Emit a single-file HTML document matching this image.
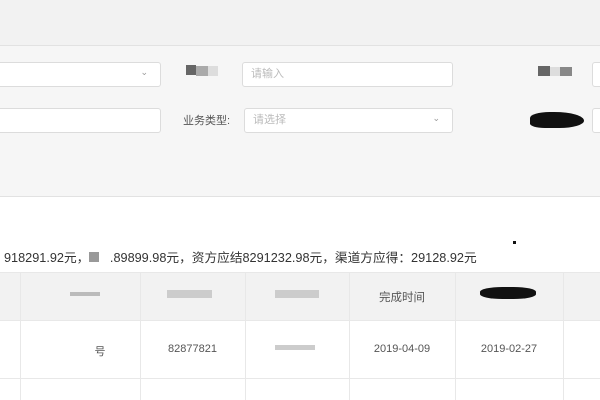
<!DOCTYPE html><html><head><meta charset="utf-8"><style>
*{margin:0;padding:0;box-sizing:border-box}
body{width:600px;height:400px;overflow:hidden;background:#fff;font-family:"Liberation Sans","Noto Sans CJK SC",sans-serif;position:relative;color:#555}
.a{position:absolute}
.inp{position:absolute;background:#fff;border:1px solid #dcdcdc;border-radius:3px;font-size:11px;color:#bbb;padding-left:8px;line-height:23px}
.arr{position:absolute;right:12px;top:-2px;font-size:9px;color:#999}
.vl{position:absolute;top:273px;height:127px;width:1px;background:#e8e8e8}
.c{position:absolute;font-size:11px;color:#555;text-align:center}
</style></head><body>
<div class="a" style="left:0;top:0;width:600px;height:45px;background:#f2f2f2"></div>
<div class="a" style="left:0;top:45px;width:600px;height:1px;background:#e2e2e2"></div>
<div class="a" style="left:0;top:46px;width:600px;height:150px;background:#f6f6f6"></div>
<div class="a" style="left:0;top:196px;width:600px;height:1px;background:#e2e2e2"></div>
<div class="inp" style="left:-4px;top:62px;width:165px;height:25px"><span class="arr">⌄</span></div>
<div class="a" style="left:186px;top:65px;width:10px;height:10px;background:#666"></div>
<div class="a" style="left:196px;top:66px;width:12px;height:10px;background:#aaa"></div>
<div class="a" style="left:208px;top:66px;width:10px;height:10px;background:#ddd"></div>
<div class="inp" style="left:242px;top:62px;width:211px;height:25px">请输入</div>
<div class="a" style="left:538px;top:66px;width:12px;height:10px;background:#666"></div>
<div class="a" style="left:550px;top:67px;width:10px;height:9px;background:#ddd"></div>
<div class="a" style="left:560px;top:67px;width:12px;height:9px;background:#888"></div>
<div class="inp" style="left:592px;top:62px;width:20px;height:25px"></div>
<div class="inp" style="left:-4px;top:108px;width:165px;height:25px"></div>
<div class="a" style="left:183px;top:112px;font-size:11px;color:#555">业务类型:</div>
<div class="inp" style="left:244px;top:108px;width:209px;height:25px">请选择<span class="arr">⌄</span></div>
<div class="a" style="left:530px;top:112px;width:54px;height:16px;background:#111;border-radius:40% 60% 50% 30%"></div>
<div class="inp" style="left:592px;top:108px;width:20px;height:25px"></div>
<div class="a" style="left:4px;top:247px;font-size:12.7px;color:#333;white-space:nowrap">918291.92元，<span style="display:inline-block;width:10px;height:10px;background:#999"></span>&nbsp;&nbsp;&nbsp;.89899.98元，资方应结8291232.98元，渠道方应得：29128.92元</div>
<div class="a" style="left:513px;top:241px;width:3px;height:3px;background:#111"></div>
<div class="a" style="left:0;top:272px;width:600px;height:49px;background:#f2f2f2;border-top:1px solid #e8e8e8;border-bottom:1px solid #e8e8e8"></div>
<div class="a" style="left:0;top:378px;width:600px;height:1px;background:#e8e8e8"></div>
<div class="vl" style="left:20px"></div><div class="vl" style="left:140px"></div><div class="vl" style="left:245px"></div><div class="vl" style="left:349px"></div><div class="vl" style="left:455px"></div><div class="vl" style="left:563px"></div>
<div class="a" style="left:70px;top:292px;width:30px;height:4px;background:#bbb"></div>
<div class="a" style="left:167px;top:290px;width:45px;height:8px;background:#ccc"></div>
<div class="a" style="left:275px;top:290px;width:44px;height:8px;background:#ccc"></div>
<div class="c" style="left:349px;top:289px;width:106px;font-size:11.5px">完成时间</div>
<div class="a" style="left:480px;top:287px;width:56px;height:12px;background:#111;border-radius:40%"></div>
<div class="c" style="left:80px;top:343px;width:40px">号</div>
<div class="c" style="left:140px;top:343px;width:105px">82877821</div>
<div class="a" style="left:275px;top:345px;width:40px;height:5px;background:#ccc"></div>
<div class="c" style="left:349px;top:343px;width:106px">2019-04-09</div>
<div class="c" style="left:455px;top:343px;width:108px">2019-02-27</div>
</body></html>
